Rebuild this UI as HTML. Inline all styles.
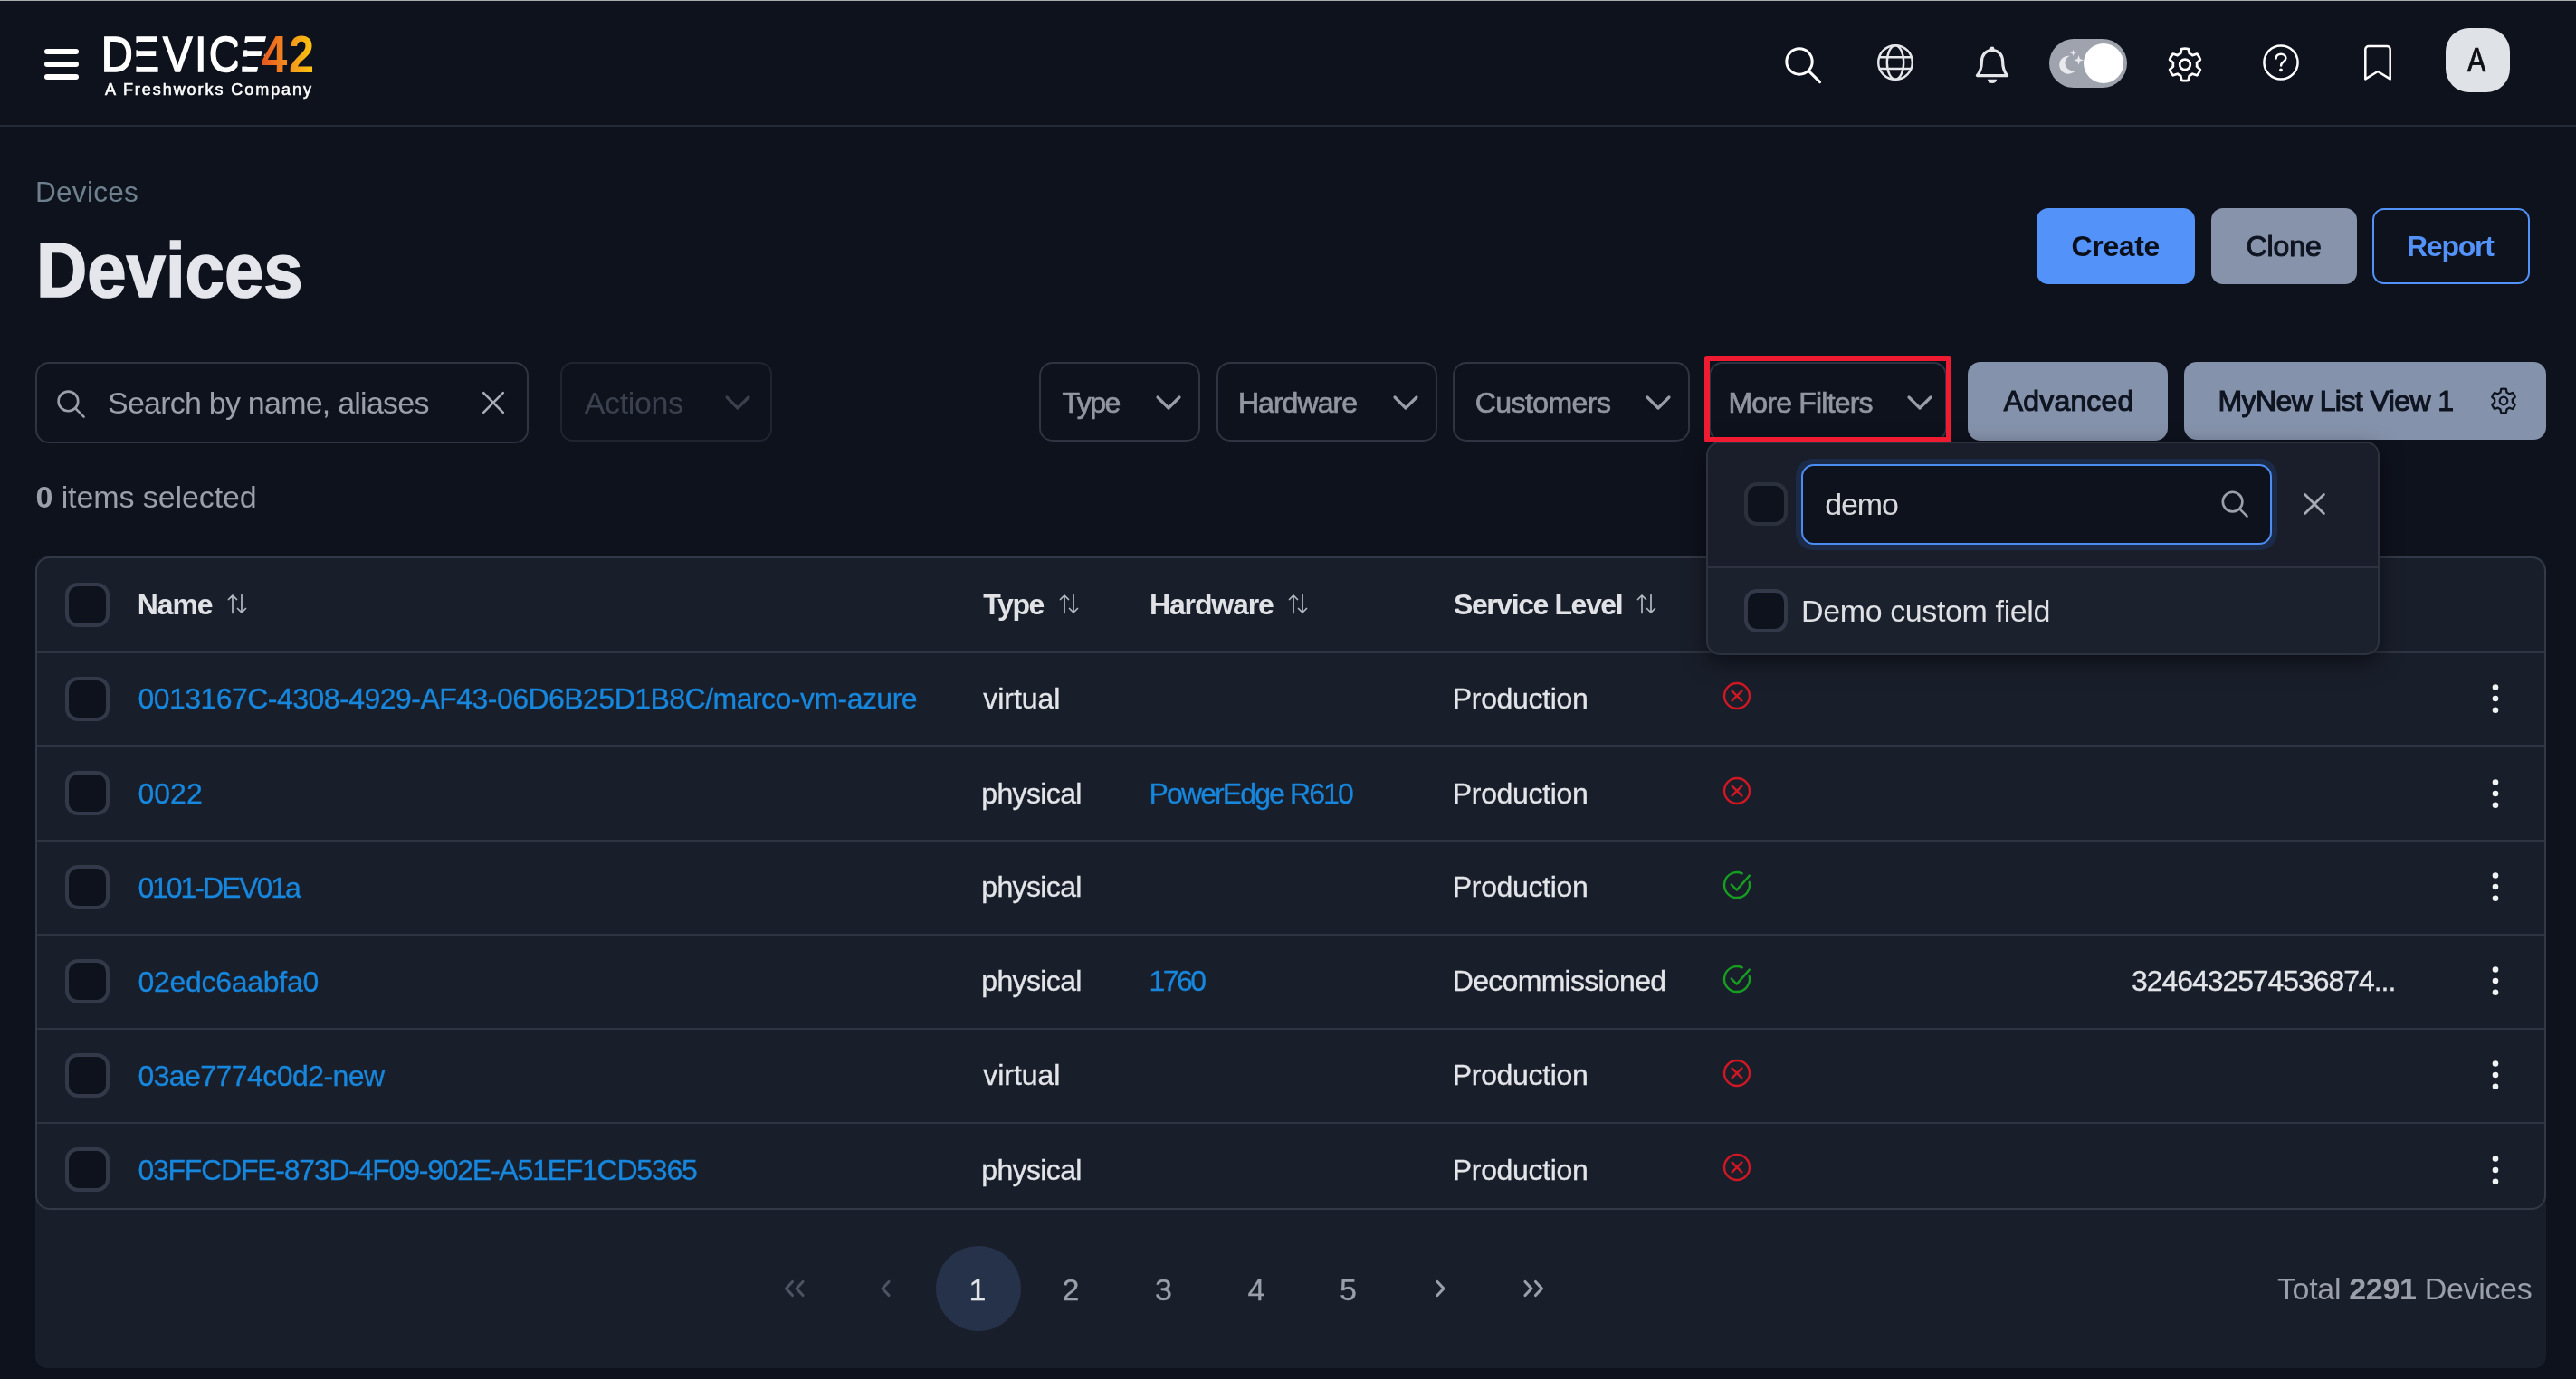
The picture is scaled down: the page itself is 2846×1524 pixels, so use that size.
<!DOCTYPE html>
<html lang="en"><head><meta charset="utf-8"><title>Devices - Device42</title>
<style>
html,body{margin:0;padding:0;background:#0e121d;width:2846px;height:1524px;overflow:hidden}
body{position:relative;font-family:"Liberation Sans", Arial, sans-serif;-webkit-font-smoothing:antialiased}
header,main,h1{margin:0;padding:0;font:inherit;display:contents}
div,svg,span.t{position:absolute;display:block}
span.t{white-space:nowrap;line-height:1em}
span.t b{font-weight:700}
#app{left:0;top:0;width:2846px;height:1524px;will-change:transform}
</style></head>
<body>
<div id="app">
<div style="left:0px;top:0px;width:2846px;height:1px;background:#a9aaae"></div><header><div style="left:0px;top:138px;width:2846px;height:2px;background:#252a37"></div><div style="left:48.5px;top:54px;width:38.5px;height:6px;background:#fff;border-radius:3px"></div><div style="left:48.5px;top:67.8px;width:38.5px;height:6px;background:#fff;border-radius:3px"></div><div style="left:48.5px;top:81.6px;width:38.5px;height:6px;background:#fff;border-radius:3px"></div><svg style="left:0px;top:0px" width="400" height="138" viewBox="0 0 400 138" >
<defs><linearGradient id="og" x1="333.3" y1="0" x2="397.7" y2="0" gradientUnits="userSpaceOnUse">
<stop offset="0" stop-color="#e8561e"/><stop offset=".45" stop-color="#f28a1e"/><stop offset="1" stop-color="#fbc60f"/></linearGradient></defs>
<g transform="scale(.87 1)" font-family='"Liberation Sans", Arial, sans-serif' font-size="56" fill="#fff" stroke="#fff" stroke-width="1.5">
<text y="79.3" x="128.4 165 206.9 247 265.2 303.4">DEVICE<tspan x="332.4 366.8" y="79.6" font-size="58" font-weight="700" fill="url(#og)" stroke="none">42</tspan></text>
</g>
<g fill="#0e121d">
<rect x="145.4" y="46.9" width="8.2" height="8.4"/>
<rect x="145.4" y="62.6" width="8.2" height="11"/>
<polygon points="145.4,36 150.4,36 150.4,84 145.4,84"/>
<rect x="265.5" y="46.9" width="9.6" height="8.4"/>
<rect x="265.5" y="62.6" width="9.6" height="11"/>
<polygon points="262.6,36 271.6,36 265.8,84 262.6,84"/>
<polygon points="295.2,36 304,36 289.6,66 289.6,73.4 301,73.4 301,84 282.6,84"/>
</g>
</svg><span class="t" id="t0" style="left:116px;top:89.9px;font-size:18px;color:#fff;-webkit-text-stroke:0.55px #fff;letter-spacing:1.944px;">A Freshworks Company</span><svg style="left:1960px;top:40px" width="60" height="60" viewBox="0 0 60 60" ><circle cx="28" cy="28" r="14.2" fill="none" stroke="#fff" stroke-width="3"/><path d="M38.4 38.6 L50.6 50.6" stroke="#fff" stroke-width="3" stroke-linecap="round"/></svg><svg style="left:2070px;top:45px" width="48" height="48" viewBox="0 0 48 48" ><g fill="none" stroke="#e6e7ea" stroke-width="2.4"><circle cx="24" cy="24" r="18.8"/><ellipse cx="24" cy="24" rx="9.2" ry="18.8"/><path d="M6.8 18.2h34.4M6.8 31h34.4"/></g></svg><svg style="left:2176px;top:45.6px" width="50" height="52" viewBox="0 0 50 52" ><path d="M25 9.6c-7.2 0-11.6 5.4-11.6 12.4 0 8.6-2.6 12.6-5 15.6h33.2c-2.4-3-5-7-5-15.6 0-7-4.4-12.400-11.6-12.400z" fill="none" stroke="#e6e7ea" stroke-width="3.2" stroke-linejoin="round"/><circle cx="25" cy="7.8" r="2.4" fill="#e6e7ea"/><path d="M19.8 41.8a5.300 5.300 0 0 0 10.400 0z" fill="#e6e7ea"/></svg><div style="left:2264px;top:42.5px;width:86px;height:54px;background:#9ea3ad;border-radius:27px"></div><div style="left:2302px;top:47.5px;width:44px;height:44px;background:#fff;border-radius:22px"></div><svg style="left:2270px;top:50px" width="36" height="36" viewBox="0 0 36 36" ><path d="M16.600 11.800a10 10 0 1 0 6.800 15.600a8.200 8.200 0 0 1-6.800-15.600z" fill="#e8e9ec"/><path d="M20.5 4.800l.9 2.700 2.700.9-2.700.9-.9 2.700-.9-2.700-2.700-.9 2.700-.9z" fill="#e8e9ec"/><path d="M26.600 11l1.300 4.100 4.100 1.300-4.100 1.300-1.300 4.100-1.300-4.100-4.100-1.300 4.100-1.300z" fill="#e8e9ec"/></svg><svg style="left:2390px;top:47px" width="48" height="48" viewBox="0 0 48 48" ><g fill="none" stroke="#fff" stroke-width="2.7" stroke-linejoin="round"><path d="M19.27 12.08L20.30 6.99 A17.80 17.80 0 0 1 27.70 6.99 L28.73 12.08A13.20 13.20 0 0 1 32.31 14.14L37.23 12.49 A17.80 17.80 0 0 1 40.93 18.90 L37.04 22.34A13.20 13.20 0 0 1 37.04 26.46L40.93 29.90 A17.80 17.80 0 0 1 37.23 36.31 L32.31 34.66A13.20 13.20 0 0 1 28.73 36.72L27.70 41.81 A17.80 17.80 0 0 1 20.30 41.81 L19.27 36.72A13.20 13.20 0 0 1 15.69 34.66L10.77 36.31 A17.80 17.80 0 0 1 7.07 29.90 L10.96 26.46A13.20 13.20 0 0 1 10.96 22.34L7.07 18.90 A17.80 17.80 0 0 1 10.77 12.49 L15.69 14.14A13.20 13.20 0 0 1 19.27 12.08Z"/><circle cx="24" cy="24.4" r="5.8"/></g></svg><svg style="left:2496px;top:45.3px" width="48" height="48" viewBox="0 0 48 48" ><circle cx="24" cy="24" r="18.600" fill="none" stroke="#fff" stroke-width="2.500"/><path d="M18.600 19.600c0-3 2.400-4.900 5.400-4.900 3.100 0 5.400 1.900 5.400 4.600 0 4-5.300 4.100-5.300 8.200" fill="none" stroke="#fff" stroke-width="2.500" stroke-linecap="round"/><circle cx="24" cy="32.400" r="1.900" fill="#fff"/></svg><svg style="left:2606px;top:44px" width="42" height="52" viewBox="0 0 42 52" ><path d="M7.300 43.400V10.600a3.600 3.600 0 0 1 3.600-3.600h20.200a3.600 3.600 0 0 1 3.600 3.600v32.800L21 35z" fill="none" stroke="#fff" stroke-width="2.500" stroke-linejoin="round"/></svg><div style="left:2702px;top:31px;width:71px;height:71px;background:#dfe2e6;border-radius:26px"></div><span class="t" id="t1" style="left:2726px;top:48.05px;font-size:37px;color:#0e1015;-webkit-text-stroke:0.7px #0e1015;transform:scaleX(0.824);transform-origin:0 0;">A</span></header><main><span class="t" id="t2" style="left:39px;top:196.72px;font-size:31.5px;color:#6e808e;letter-spacing:0.286px;">Devices</span><h1><span class="t" id="t3" style="left:39.79px;top:256.78px;font-size:84.5px;color:#e4e6ec;font-weight:700;-webkit-text-stroke:1.6px #e4e6ec;transform:scaleX(0.9221);transform-origin:0 0;">Devices</span></h1><div class="btn" style="left:2250px;top:230.3px;width:175px;height:84.2px;background:#5392f9;border-radius:13px"></div><span class="t" id="t4" style="left:2288.5px;top:256.3px;font-size:32px;color:#0b0f1a;font-weight:700;letter-spacing:-0.343px;">Create</span><div class="btn" style="left:2443px;top:230.3px;width:161px;height:84.2px;background:#8793ab;border-radius:13px"></div><span class="t" id="t5" style="left:2481.6px;top:256.3px;font-size:32px;color:#0e1420;-webkit-text-stroke:1px #0e1420;letter-spacing:-0.103px;">Clone</span><div class="btn" style="left:2621px;top:230.3px;width:174px;height:84.2px;border:2.500px solid #5392f9;border-radius:13px;box-sizing:border-box"></div><span class="t" id="t6" style="left:2659px;top:256.3px;font-size:32px;color:#5392f9;font-weight:700;letter-spacing:-1.251px;">Report</span><div class="inp" style="left:39px;top:400px;width:545px;height:90px;border:2px solid #2e3442;border-radius:15px;box-sizing:border-box"></div><svg style="left:58px;top:426px" width="40" height="40" viewBox="0 0 40 40" ><circle cx="17.400" cy="17.400" r="10.800" fill="none" stroke="#9a9fa9" stroke-width="2.600"/><path d="M25.400 25.400L34.600 34.600" stroke="#9a9fa9" stroke-width="2.600" stroke-linecap="round"/></svg><span class="t" id="t7" style="left:119px;top:427.7px;font-size:34px;color:#9a9fa9;letter-spacing:-0.768px;">Search by name, aliases</span><svg style="left:529px;top:428.5px" width="32" height="32" viewBox="0 0 32 32" ><path d="M5.2 5.2L26.800 26.800M26.800 5.2L5.2 26.800" stroke="#a9adb6" stroke-width="2.600" stroke-linecap="round"/></svg><div class="inp" style="left:619px;top:400px;width:234px;height:88px;border:2px solid #1f2431;border-radius:14px;box-sizing:border-box"></div><span class="t" id="t8" style="left:645.7px;top:427.7px;font-size:34px;color:#3a404e;letter-spacing:-0.366px;">Actions</span><svg style="left:800px;top:436.3px" width="30" height="18" viewBox="0 0 30 18" ><path d="M3 3L15 15L27 3" fill="none" stroke="#3a404e" stroke-width="3.2" stroke-linecap="round" stroke-linejoin="round"/></svg><div class="inp" style="left:1148.3px;top:400px;width:177.5px;height:88px;border:2px solid #2e3442;border-radius:15px;box-sizing:border-box"></div><span class="t" id="t9" style="left:1173.4px;top:428.8px;font-size:32px;color:#9196a0;-webkit-text-stroke:0.7px #9196a0;letter-spacing:-1.493px;">Type</span><svg style="left:1276px;top:436.3px" width="30" height="18" viewBox="0 0 30 18" ><path d="M3 3L15 15L27 3" fill="none" stroke="#989da7" stroke-width="3.2" stroke-linecap="round" stroke-linejoin="round"/></svg><div class="inp" style="left:1344px;top:400px;width:243.7px;height:88px;border:2px solid #2e3442;border-radius:15px;box-sizing:border-box"></div><span class="t" id="t10" style="left:1367.9px;top:428.8px;font-size:32px;color:#9196a0;-webkit-text-stroke:0.7px #9196a0;letter-spacing:-0.946px;">Hardware</span><svg style="left:1538px;top:436.3px" width="30" height="18" viewBox="0 0 30 18" ><path d="M3 3L15 15L27 3" fill="none" stroke="#989da7" stroke-width="3.2" stroke-linecap="round" stroke-linejoin="round"/></svg><div class="inp" style="left:1605px;top:400px;width:261.5px;height:88px;border:2px solid #2e3442;border-radius:15px;box-sizing:border-box"></div><span class="t" id="t11" style="left:1629.7px;top:428.8px;font-size:32px;color:#9196a0;-webkit-text-stroke:0.7px #9196a0;letter-spacing:-0.563px;">Customers</span><svg style="left:1817px;top:436.3px" width="30" height="18" viewBox="0 0 30 18" ><path d="M3 3L15 15L27 3" fill="none" stroke="#989da7" stroke-width="3.2" stroke-linecap="round" stroke-linejoin="round"/></svg><div class="inp" style="left:1888px;top:400px;width:263px;height:88px;border:2px solid #2e3442;border-radius:15px;box-sizing:border-box"></div><span class="t" id="t12" style="left:1909.4px;top:428.8px;font-size:32px;color:#9196a0;-webkit-text-stroke:0.7px #9196a0;letter-spacing:-0.791px;">More Filters</span><svg style="left:2106px;top:436.3px" width="30" height="18" viewBox="0 0 30 18" ><path d="M3 3L15 15L27 3" fill="none" stroke="#989da7" stroke-width="3.2" stroke-linecap="round" stroke-linejoin="round"/></svg><div class="btn" style="left:2174px;top:400px;width:221px;height:87px;background:#8592ab;border-radius:14px"></div><span class="t" id="t13" style="left:2213.8px;top:427.3px;font-size:32px;color:#0e1420;-webkit-text-stroke:1.1px #0e1420;letter-spacing:0.167px;">Advanced</span><div class="btn" style="left:2413px;top:400px;width:400px;height:86px;background:#8592ab;border-radius:14px"></div><span class="t" id="t14" style="left:2450.5px;top:427.3px;font-size:32px;color:#0e1420;-webkit-text-stroke:1.1px #0e1420;letter-spacing:-0.57px;">MyNew List View 1</span><svg style="left:2748px;top:425px" width="36" height="36" viewBox="0 0 36 36" ><g fill="none" stroke="#0e1420" stroke-width="2.3" stroke-linejoin="round"><path d="M14.45 8.76L15.21 4.89 A13.40 13.40 0 0 1 20.79 4.89 L21.55 8.76A9.90 9.90 0 0 1 24.23 10.31L27.96 9.03 A13.40 13.40 0 0 1 30.74 13.86 L27.78 16.45A9.90 9.90 0 0 1 27.78 19.55L30.74 22.14 A13.40 13.40 0 0 1 27.96 26.97 L24.23 25.69A9.90 9.90 0 0 1 21.55 27.24L20.79 31.11 A13.40 13.40 0 0 1 15.21 31.11 L14.45 27.24A9.90 9.90 0 0 1 11.77 25.69L8.04 26.97 A13.40 13.40 0 0 1 5.26 22.14 L8.22 19.55A9.90 9.90 0 0 1 8.22 16.45L5.26 13.86 A13.40 13.40 0 0 1 8.04 9.03 L11.77 10.31A9.90 9.90 0 0 1 14.45 8.76Z"/><circle cx="18" cy="18" r="4.3"/></g></svg><span class="t" id="t15" style="left:39.46px;top:531.9px;font-size:34px;color:#9a9fa9;letter-spacing:-0.09px;"><b>0</b> items selected</span><div class="card" style="left:39px;top:615px;width:2774px;height:896.5px;background:#191e2b;border-radius:13px"></div><div class="table" style="left:39px;top:614.7px;width:2773.5px;height:722.8px;border:2px solid #333946;border-radius:16px;box-sizing:border-box"></div><div style="left:41px;top:720px;width:2770px;height:2px;background:#2e3441"></div><div style="left:41px;top:823px;width:2770px;height:2px;background:#2e3441"></div><div style="left:41px;top:928px;width:2770px;height:2px;background:#2e3441"></div><div style="left:41px;top:1032px;width:2770px;height:2px;background:#2e3441"></div><div style="left:41px;top:1136px;width:2770px;height:2px;background:#2e3441"></div><div style="left:41px;top:1240px;width:2770px;height:2px;background:#2e3441"></div><div class="cb" style="left:72px;top:643.5px;width:49px;height:49px;border:4px solid #333948;border-radius:14px;background:#0e121d;box-sizing:border-box"></div><span class="t" id="t16" style="left:151.7px;top:651.8px;font-size:32px;color:#e0e2e6;font-weight:700;letter-spacing:-1.086px;">Name</span><svg style="left:251px;top:655px" width="22" height="25" viewBox="0 0 22 25" ><g fill="none" stroke="#b4b8c0" stroke-width="1.700" stroke-linecap="round" stroke-linejoin="round"><path d="M6 22.500V3M1.500 7.500L6 3l4.500 4.500M16 2.500V22M11.500 17.500L16 22l4.500-4.500"/></g></svg><span class="t" id="t17" style="left:1086.3px;top:651.8px;font-size:32px;color:#e0e2e6;font-weight:700;letter-spacing:-1.405px;">Type</span><svg style="left:1170px;top:655px" width="22" height="25" viewBox="0 0 22 25" ><g fill="none" stroke="#b4b8c0" stroke-width="1.700" stroke-linecap="round" stroke-linejoin="round"><path d="M6 22.500V3M1.500 7.500L6 3l4.500 4.500M16 2.500V22M11.500 17.500L16 22l4.500-4.500"/></g></svg><span class="t" id="t18" style="left:1270px;top:651.8px;font-size:32px;color:#e0e2e6;font-weight:700;letter-spacing:-1.15px;">Hardware</span><svg style="left:1423px;top:655px" width="22" height="25" viewBox="0 0 22 25" ><g fill="none" stroke="#b4b8c0" stroke-width="1.700" stroke-linecap="round" stroke-linejoin="round"><path d="M6 22.500V3M1.500 7.500L6 3l4.500 4.500M16 2.500V22M11.500 17.500L16 22l4.500-4.500"/></g></svg><span class="t" id="t19" style="left:1606px;top:651.8px;font-size:32px;color:#e0e2e6;font-weight:700;letter-spacing:-1.417px;">Service Level</span><svg style="left:1808px;top:655px" width="22" height="25" viewBox="0 0 22 25" ><g fill="none" stroke="#b4b8c0" stroke-width="1.700" stroke-linecap="round" stroke-linejoin="round"><path d="M6 22.500V3M1.500 7.500L6 3l4.500 4.500M16 2.500V22M11.500 17.500L16 22l4.500-4.500"/></g></svg><div class="cb" style="left:72px;top:747.5px;width:49px;height:49px;border:4px solid #333948;border-radius:14px;background:#0e121d;box-sizing:border-box"></div><span class="t" id="t20" style="left:152.4px;top:756.3px;font-size:32px;color:#1787dd;-webkit-text-stroke:0.3px #1787dd;letter-spacing:-0.528px;">0013167C-4308-4929-AF43-06D6B25D1B8C/marco-vm-azure</span><span class="t" id="t21" style="left:1086.3px;top:756px;font-size:32px;color:#e3e5e9;-webkit-text-stroke:0.3px #e3e5e9;letter-spacing:-0.042px;">virtual</span><span class="t" id="t22" style="left:1604.8px;top:756px;font-size:32px;color:#e3e5e9;-webkit-text-stroke:0.3px #e3e5e9;letter-spacing:-0.332px;">Production</span><svg style="left:1902px;top:752.2px" width="34" height="34" viewBox="0 0 34 34" ><circle cx="17" cy="17" r="14" fill="none" stroke="#cf1824" stroke-width="2.400"/><path d="M11.600 11.600L22.400 22.400M22.400 11.600L11.600 22.400" stroke="#cf1824" stroke-width="2.400" stroke-linecap="round"/></svg><svg style="left:2751.3px;top:752px" width="12" height="40" viewBox="0 0 12 40" ><circle cx="6" cy="7.500" r="3.300" fill="#f2f3f5"/><circle cx="6" cy="20" r="3.300" fill="#f2f3f5"/><circle cx="6" cy="32.700" r="3.300" fill="#f2f3f5"/></svg><div class="cb" style="left:72px;top:852.1px;width:49px;height:49px;border:4px solid #333948;border-radius:14px;background:#0e121d;box-sizing:border-box"></div><span class="t" id="t23" style="left:152.4px;top:860.9px;font-size:32px;color:#1787dd;-webkit-text-stroke:0.3px #1787dd;letter-spacing:0.036px;">0022</span><span class="t" id="t24" style="left:1084.3px;top:860.6px;font-size:32px;color:#e3e5e9;-webkit-text-stroke:0.3px #e3e5e9;letter-spacing:-0.643px;">physical</span><span class="t" id="t25" style="left:1269.6px;top:860.6px;font-size:32px;color:#1787dd;-webkit-text-stroke:0.3px #1787dd;letter-spacing:-1.895px;">PowerEdge R610</span><span class="t" id="t26" style="left:1604.8px;top:860.6px;font-size:32px;color:#e3e5e9;-webkit-text-stroke:0.3px #e3e5e9;letter-spacing:-0.332px;">Production</span><svg style="left:1902px;top:856.8px" width="34" height="34" viewBox="0 0 34 34" ><circle cx="17" cy="17" r="14" fill="none" stroke="#cf1824" stroke-width="2.400"/><path d="M11.600 11.600L22.400 22.400M22.400 11.600L11.600 22.400" stroke="#cf1824" stroke-width="2.400" stroke-linecap="round"/></svg><svg style="left:2751.3px;top:856.6px" width="12" height="40" viewBox="0 0 12 40" ><circle cx="6" cy="7.500" r="3.300" fill="#f2f3f5"/><circle cx="6" cy="20" r="3.300" fill="#f2f3f5"/><circle cx="6" cy="32.700" r="3.300" fill="#f2f3f5"/></svg><div class="cb" style="left:72px;top:955.9px;width:49px;height:49px;border:4px solid #333948;border-radius:14px;background:#0e121d;box-sizing:border-box"></div><span class="t" id="t27" style="left:152.4px;top:964.7px;font-size:32px;color:#1787dd;-webkit-text-stroke:0.3px #1787dd;letter-spacing:-2.063px;">0101-DEV01a</span><span class="t" id="t28" style="left:1084.3px;top:964.4px;font-size:32px;color:#e3e5e9;-webkit-text-stroke:0.3px #e3e5e9;letter-spacing:-0.643px;">physical</span><span class="t" id="t29" style="left:1604.8px;top:964.4px;font-size:32px;color:#e3e5e9;-webkit-text-stroke:0.3px #e3e5e9;letter-spacing:-0.332px;">Production</span><svg style="left:1902px;top:960.6px" width="34" height="34" viewBox="0 0 34 34" ><path d="M30.600 13.800A14 14 0 1 1 22.800 4.300" fill="none" stroke="#179e20" stroke-width="2.400" stroke-linecap="round"/><path d="M10.800 16.600L16.800 22.600L30.800 6.600" fill="none" stroke="#179e20" stroke-width="2.400" stroke-linecap="round" stroke-linejoin="round"/></svg><svg style="left:2751.3px;top:960.4px" width="12" height="40" viewBox="0 0 12 40" ><circle cx="6" cy="7.500" r="3.300" fill="#f2f3f5"/><circle cx="6" cy="20" r="3.300" fill="#f2f3f5"/><circle cx="6" cy="32.700" r="3.300" fill="#f2f3f5"/></svg><div class="cb" style="left:72px;top:1059.9px;width:49px;height:49px;border:4px solid #333948;border-radius:14px;background:#0e121d;box-sizing:border-box"></div><span class="t" id="t30" style="left:152.4px;top:1068.7px;font-size:32px;color:#1787dd;-webkit-text-stroke:0.3px #1787dd;letter-spacing:-0.269px;">02edc6aabfa0</span><span class="t" id="t31" style="left:1084.3px;top:1068.4px;font-size:32px;color:#e3e5e9;-webkit-text-stroke:0.3px #e3e5e9;letter-spacing:-0.643px;">physical</span><span class="t" id="t32" style="left:1269.6px;top:1068.4px;font-size:32px;color:#1787dd;-webkit-text-stroke:0.3px #1787dd;letter-spacing:-2.564px;">1760</span><span class="t" id="t33" style="left:1604.8px;top:1068.4px;font-size:32px;color:#e3e5e9;-webkit-text-stroke:0.3px #e3e5e9;letter-spacing:-0.702px;">Decommissioned</span><svg style="left:1902px;top:1064.6px" width="34" height="34" viewBox="0 0 34 34" ><path d="M30.600 13.800A14 14 0 1 1 22.800 4.300" fill="none" stroke="#179e20" stroke-width="2.400" stroke-linecap="round"/><path d="M10.800 16.600L16.800 22.600L30.800 6.600" fill="none" stroke="#179e20" stroke-width="2.400" stroke-linecap="round" stroke-linejoin="round"/></svg><span class="t" id="t34" style="left:2355px;top:1068.4px;font-size:32px;color:#e3e5e9;-webkit-text-stroke:0.3px #e3e5e9;letter-spacing:-1.063px;">3246432574536874...</span><svg style="left:2751.3px;top:1064.4px" width="12" height="40" viewBox="0 0 12 40" ><circle cx="6" cy="7.500" r="3.300" fill="#f2f3f5"/><circle cx="6" cy="20" r="3.300" fill="#f2f3f5"/><circle cx="6" cy="32.700" r="3.300" fill="#f2f3f5"/></svg><div class="cb" style="left:72px;top:1163.9px;width:49px;height:49px;border:4px solid #333948;border-radius:14px;background:#0e121d;box-sizing:border-box"></div><span class="t" id="t35" style="left:152.4px;top:1172.7px;font-size:32px;color:#1787dd;-webkit-text-stroke:0.3px #1787dd;letter-spacing:-0.561px;">03ae7774c0d2-new</span><span class="t" id="t36" style="left:1086.3px;top:1172.4px;font-size:32px;color:#e3e5e9;-webkit-text-stroke:0.3px #e3e5e9;letter-spacing:-0.042px;">virtual</span><span class="t" id="t37" style="left:1604.8px;top:1172.4px;font-size:32px;color:#e3e5e9;-webkit-text-stroke:0.3px #e3e5e9;letter-spacing:-0.332px;">Production</span><svg style="left:1902px;top:1168.6px" width="34" height="34" viewBox="0 0 34 34" ><circle cx="17" cy="17" r="14" fill="none" stroke="#cf1824" stroke-width="2.400"/><path d="M11.600 11.600L22.400 22.400M22.400 11.600L11.600 22.400" stroke="#cf1824" stroke-width="2.400" stroke-linecap="round"/></svg><svg style="left:2751.3px;top:1168.4px" width="12" height="40" viewBox="0 0 12 40" ><circle cx="6" cy="7.500" r="3.300" fill="#f2f3f5"/><circle cx="6" cy="20" r="3.300" fill="#f2f3f5"/><circle cx="6" cy="32.700" r="3.300" fill="#f2f3f5"/></svg><div class="cb" style="left:72px;top:1268.1px;width:49px;height:49px;border:4px solid #333948;border-radius:14px;background:#0e121d;box-sizing:border-box"></div><span class="t" id="t38" style="left:152.4px;top:1276.9px;font-size:32px;color:#1787dd;-webkit-text-stroke:0.3px #1787dd;letter-spacing:-1.235px;">03FFCDFE-873D-4F09-902E-A51EF1CD5365</span><span class="t" id="t39" style="left:1084.3px;top:1276.6px;font-size:32px;color:#e3e5e9;-webkit-text-stroke:0.3px #e3e5e9;letter-spacing:-0.643px;">physical</span><span class="t" id="t40" style="left:1604.8px;top:1276.6px;font-size:32px;color:#e3e5e9;-webkit-text-stroke:0.3px #e3e5e9;letter-spacing:-0.332px;">Production</span><svg style="left:1902px;top:1272.8px" width="34" height="34" viewBox="0 0 34 34" ><circle cx="17" cy="17" r="14" fill="none" stroke="#cf1824" stroke-width="2.400"/><path d="M11.600 11.600L22.400 22.400M22.400 11.600L11.600 22.400" stroke="#cf1824" stroke-width="2.400" stroke-linecap="round"/></svg><svg style="left:2751.3px;top:1272.6px" width="12" height="40" viewBox="0 0 12 40" ><circle cx="6" cy="7.500" r="3.300" fill="#f2f3f5"/><circle cx="6" cy="20" r="3.300" fill="#f2f3f5"/><circle cx="6" cy="32.700" r="3.300" fill="#f2f3f5"/></svg><div class="page-active" style="left:1033.5px;top:1377px;width:94px;height:94px;background:#263249;border-radius:50%"></div><span class="t" id="t41" style="left:1070.6px;top:1407.6px;font-size:34px;color:#e3e5e9;-webkit-text-stroke:0.3px #e3e5e9;">1</span><span class="t" id="t42" style="left:1173.5px;top:1407.6px;font-size:34px;color:#9a9fa9;-webkit-text-stroke:0.3px #9a9fa9;">2</span><span class="t" id="t43" style="left:1276px;top:1407.6px;font-size:34px;color:#9a9fa9;-webkit-text-stroke:0.3px #9a9fa9;">3</span><span class="t" id="t44" style="left:1378.5px;top:1407.6px;font-size:34px;color:#9a9fa9;-webkit-text-stroke:0.3px #9a9fa9;">4</span><span class="t" id="t45" style="left:1480px;top:1407.6px;font-size:34px;color:#9a9fa9;-webkit-text-stroke:0.3px #9a9fa9;">5</span><svg style="left:862px;top:1408px" width="32" height="32" viewBox="0 0 32 32" ><path d="M13.500 8.500L6.500 16l7 7.500M25 8.500L18 16l7 7.500" stroke="#4d5361" stroke-width="3.100" stroke-linecap="round" stroke-linejoin="round" fill="none"/></svg><svg style="left:962px;top:1408px" width="32" height="32" viewBox="0 0 32 32" ><path d="M20 8.500L13 16l7 7.500" stroke="#4d5361" stroke-width="3.100" stroke-linecap="round" stroke-linejoin="round" fill="none"/></svg><svg style="left:1576px;top:1408px" width="32" height="32" viewBox="0 0 32 32" ><path d="M12 8.500L19 16l-7 7.500" stroke="#9a9fa9" stroke-width="3.100" stroke-linecap="round" stroke-linejoin="round" fill="none"/></svg><svg style="left:1678px;top:1408px" width="32" height="32" viewBox="0 0 32 32" ><path d="M7 8.500L14 16l-7 7.500M18.500 8.500L25.500 16l-7 7.500" stroke="#9a9fa9" stroke-width="3.100" stroke-linecap="round" stroke-linejoin="round" fill="none"/></svg><span class="t" id="t46" style="left:2515.96px;top:1407.3px;font-size:34px;color:#9a9fa9;letter-spacing:-0.33px;">Total <b>2291</b> Devices</span><div class="panel" style="left:1885.3px;top:488px;width:743.7px;height:236px;background:#1c222d;border:2px solid #2c3240;border-radius:15px;box-sizing:border-box;box-shadow:0 8px 24px rgba(0,0,0,.5);overflow:hidden"><div style="left:0;top:0;width:742px;height:136px;background:#191e2a"></div><div style="left:0;top:136px;width:742px;height:2px;background:#2c3240"></div></div><div class="cb" style="left:1926.6px;top:533px;width:48px;height:48px;border:4px solid #2b303d;border-radius:14px;background:#0e121d;box-sizing:border-box"></div><div style="left:1984px;top:507px;width:532px;height:101px;background:#1b2b47;border-radius:19px"></div><div class="inp" style="left:1990px;top:513px;width:520px;height:89px;border:2.500px solid #4a8cf0;border-radius:14px;background:#0e121d;box-sizing:border-box"></div><span class="t" id="t47" style="left:2016.3px;top:539.7px;font-size:34px;color:#d6d8dc;letter-spacing:-1.147px;">demo</span><svg style="left:2450px;top:538px" width="40" height="40" viewBox="0 0 40 40" ><circle cx="16.600" cy="16.600" r="10.800" fill="none" stroke="#9a9fa9" stroke-width="2.600"/><path d="M24.600 24.600L32.600 32.600" stroke="#9a9fa9" stroke-width="2.600" stroke-linecap="round"/></svg><svg style="left:2541px;top:540.5px" width="32" height="32" viewBox="0 0 32 32" ><path d="M5.600 5.600L26.400 26.400M26.400 5.600L5.600 26.400" stroke="#a6aab3" stroke-width="2.800" stroke-linecap="round"/></svg><div class="cb" style="left:1926.6px;top:651px;width:48px;height:48px;border:4px solid #333948;border-radius:14px;background:#0e121d;box-sizing:border-box"></div><span class="t" id="t48" style="left:1990px;top:657.5px;font-size:34px;color:#dfe1e5;letter-spacing:-0.384px;">Demo custom field</span><div class="hl" style="left:1882.7px;top:393.3px;width:273.5px;height:95.4px;border:6px solid #ee1b31;border-radius:3px;box-sizing:border-box"></div></main>
</div>
<script>(function(){var w=window.innerWidth,k=w/2846;if(w&&Math.abs(k-1)>0.01){var a=document.getElementById("app");a.style.transformOrigin="0 0";a.style.transform="scale("+k+")";}})();</script>
</body></html>
